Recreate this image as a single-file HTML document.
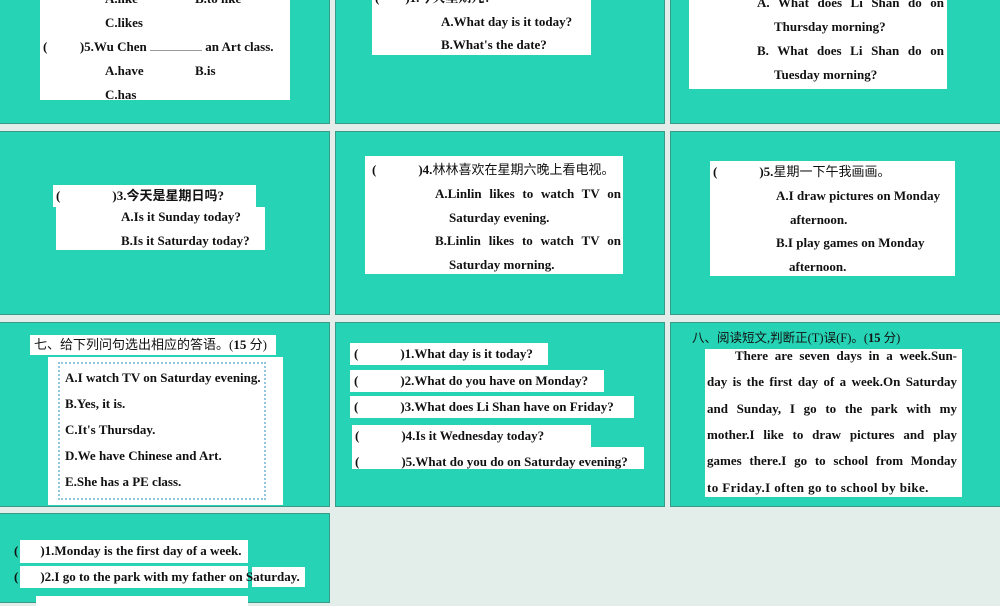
<!DOCTYPE html>
<html><head><meta charset="utf-8"><style>
*{margin:0;padding:0;box-sizing:border-box}
body{width:1000px;height:600px;background:#e3eeeb;position:relative;overflow:hidden;font-family:"Liberation Serif","Noto Serif CJK SC",serif;font-weight:bold;font-size:13px;color:#111}
.t{position:absolute;background:#26d4b5;border:1px solid #3a9a88}
.w{position:absolute;background:#fff}
.l{position:absolute;white-space:nowrap;line-height:16px}
.cj{font-family:"Liberation Serif","Noto Sans CJK SC",sans-serif;font-weight:normal}
.j{text-align:justify;text-align-last:justify}
</style></head><body>
<div class="t" style="left:-1px;top:-2px;width:331px;height:126px"></div>
<div class="t" style="left:335px;top:-2px;width:330px;height:126px"></div>
<div class="t" style="left:670px;top:-2px;width:331px;height:126px"></div>
<div class="t" style="left:-1px;top:131px;width:331px;height:184px"></div>
<div class="t" style="left:335px;top:131px;width:330px;height:184px"></div>
<div class="t" style="left:670px;top:131px;width:331px;height:184px"></div>
<div class="t" style="left:-1px;top:322px;width:331px;height:185px"></div>
<div class="t" style="left:335px;top:322px;width:330px;height:185px"></div>
<div class="t" style="left:670px;top:322px;width:331px;height:185px"></div>
<div class="t" style="left:-1px;top:513px;width:331px;height:90px"></div>

<div class="w" style="left:40px;top:0;width:250px;height:100px"></div>
<div class="l" style="left:105px;top:-9px">A.like</div><div class="l" style="left:195px;top:-9px">B.to like</div>
<div class="l" style="left:105px;top:15px">C.likes</div>
<div class="l" style="left:43px;top:39px">(&nbsp;&nbsp;&nbsp;&nbsp;&nbsp;&nbsp;&nbsp;&nbsp;&nbsp;&nbsp;)5.Wu Chen <span style="display:inline-block;width:52px;border-bottom:1px solid #999"></span> an Art class.</div>
<div class="l" style="left:105px;top:63px">A.have</div><div class="l" style="left:195px;top:63px">B.is</div>
<div class="l" style="left:105px;top:87px">C.has</div>

<div class="w" style="left:372px;top:0;width:219px;height:55px"></div>
<div class="l" style="left:375px;top:-10px">(&nbsp;&nbsp;&nbsp;&nbsp;&nbsp;&nbsp;&nbsp;&nbsp;)1.今天星期几?</div>
<div class="l" style="left:441px;top:14px">A.What day is it today?</div>
<div class="l" style="left:441px;top:37px">B.What's the date?</div>

<div class="w" style="left:689px;top:0;width:258px;height:89px"></div>
<div class="l j" style="left:757px;top:-5px;width:187px">A. What does Li Shan do on</div>
<div class="l" style="left:774px;top:19px">Thursday morning?</div>
<div class="l j" style="left:757px;top:43px;width:187px">B. What does Li Shan do on</div>
<div class="l" style="left:774px;top:67px">Tuesday morning?</div>

<div class="w" style="left:53px;top:185px;width:203px;height:22px"></div>
<div class="w" style="left:56px;top:207px;width:209px;height:43px"></div>
<div class="l" style="left:56px;top:188px">(<span style="display:inline-block;width:52px"></span>)<span class="cj" style="font-weight:bold">3.今天是星期日吗?</span></div>
<div class="l" style="left:121px;top:209px">A.Is it Sunday today?</div>
<div class="l" style="left:121px;top:233px">B.Is it Saturday today?</div>

<div class="w" style="left:365px;top:156px;width:258px;height:118px"></div>
<div class="l" style="left:372px;top:162px">(<span style="display:inline-block;width:42px"></span>)4.<span class="cj">林林喜欢在星期六晚上看电视。</span></div>
<div class="l j" style="left:435px;top:186px;width:186px">A.Linlin likes to watch TV on</div>
<div class="l" style="left:449px;top:210px">Saturday evening.</div>
<div class="l j" style="left:435px;top:233px;width:186px">B.Linlin likes to watch TV on</div>
<div class="l" style="left:449px;top:257px">Saturday morning.</div>

<div class="w" style="left:710px;top:161px;width:245px;height:115px"></div>
<div class="l" style="left:713px;top:164px">(<span style="display:inline-block;width:42px"></span>)5.<span class="cj">星期一下午我画画。</span></div>
<div class="l" style="left:776px;top:188px">A.I draw pictures on Monday</div>
<div class="l" style="left:790px;top:212px">afternoon.</div>
<div class="l" style="left:776px;top:235px">B.I play games on Monday</div>
<div class="l" style="left:789px;top:259px">afternoon.</div>

<div class="w" style="left:30px;top:335px;width:246px;height:20px"></div>
<div class="l cj" style="left:34px;top:337px;font-size:13px">七、给下列问句选出相应的答语。(<b style="font-family:'Liberation Serif'">15</b> 分)</div>
<div class="w" style="left:48px;top:357px;width:235px;height:148px"></div>
<div style="position:absolute;left:58px;top:362px;width:208px;height:138px;border:2px dotted #8fc8e0"></div>
<div class="l" style="left:65px;top:370px">A.I watch TV on Saturday evening.</div>
<div class="l" style="left:65px;top:396px">B.Yes, it is.</div>
<div class="l" style="left:65px;top:422px">C.It's Thursday.</div>
<div class="l" style="left:65px;top:448px">D.We have Chinese and Art.</div>
<div class="l" style="left:65px;top:474px">E.She has a PE class.</div>

<div class="w" style="left:350px;top:343px;width:198px;height:22px"></div>
<div class="w" style="left:350px;top:370px;width:254px;height:22px"></div>
<div class="w" style="left:350px;top:396px;width:284px;height:22px"></div>
<div class="w" style="left:352px;top:425px;width:239px;height:22px"></div>
<div class="w" style="left:352px;top:447px;width:292px;height:22px"></div>
<div class="l" style="left:354px;top:346px">(<span style="display:inline-block;width:42px"></span>)1.What day is it today?</div>
<div class="l" style="left:354px;top:373px">(<span style="display:inline-block;width:42px"></span>)2.What do you have on Monday?</div>
<div class="l" style="left:354px;top:399px">(<span style="display:inline-block;width:42px"></span>)3.What does Li Shan have on Friday?</div>
<div class="l" style="left:355px;top:428px">(<span style="display:inline-block;width:42px"></span>)4.Is it Wednesday today?</div>
<div class="l" style="left:355px;top:454px">(<span style="display:inline-block;width:42px"></span>)5.What do you do on Saturday evening?</div>

<div class="l cj" style="left:692px;top:330px;font-size:12.5px">八、阅读短文,判断正(T)误(F)。(<b style="font-family:'Liberation Serif'">15</b> 分)</div>
<div class="w" style="left:705px;top:349px;width:257px;height:148px"></div>
<div class="l j" style="left:735px;top:348px;width:222px">There are seven days in a week.Sun-</div>
<div class="l j" style="left:707px;top:374px;width:250px">day is the first day of a week.On Saturday</div>
<div class="l j" style="left:707px;top:401px;width:250px">and Sunday, I go to the park with my</div>
<div class="l j" style="left:707px;top:427px;width:250px">mother.I like to draw pictures and play</div>
<div class="l j" style="left:707px;top:453px;width:250px">games there.I go to school from Monday</div>
<div class="l" style="left:707px;top:480px;letter-spacing:0.4px">to Friday.I often go to school by bike.</div>

<div class="w" style="left:20px;top:540px;width:228px;height:23px"></div>
<div class="w" style="left:20px;top:566px;width:228px;height:22px"></div>
<div class="w" style="left:252px;top:567px;width:53px;height:20px"></div>
<div class="w" style="left:36px;top:596px;width:212px;height:10px"></div>
<div class="l" style="left:14px;top:543px">(<span style="display:inline-block;width:22px"></span>)1.Monday is the first day of a week.</div>
<div class="l" style="left:14px;top:569px">(<span style="display:inline-block;width:22px"></span>)2.I go to the park with my father on Saturday.</div>
</body></html>
